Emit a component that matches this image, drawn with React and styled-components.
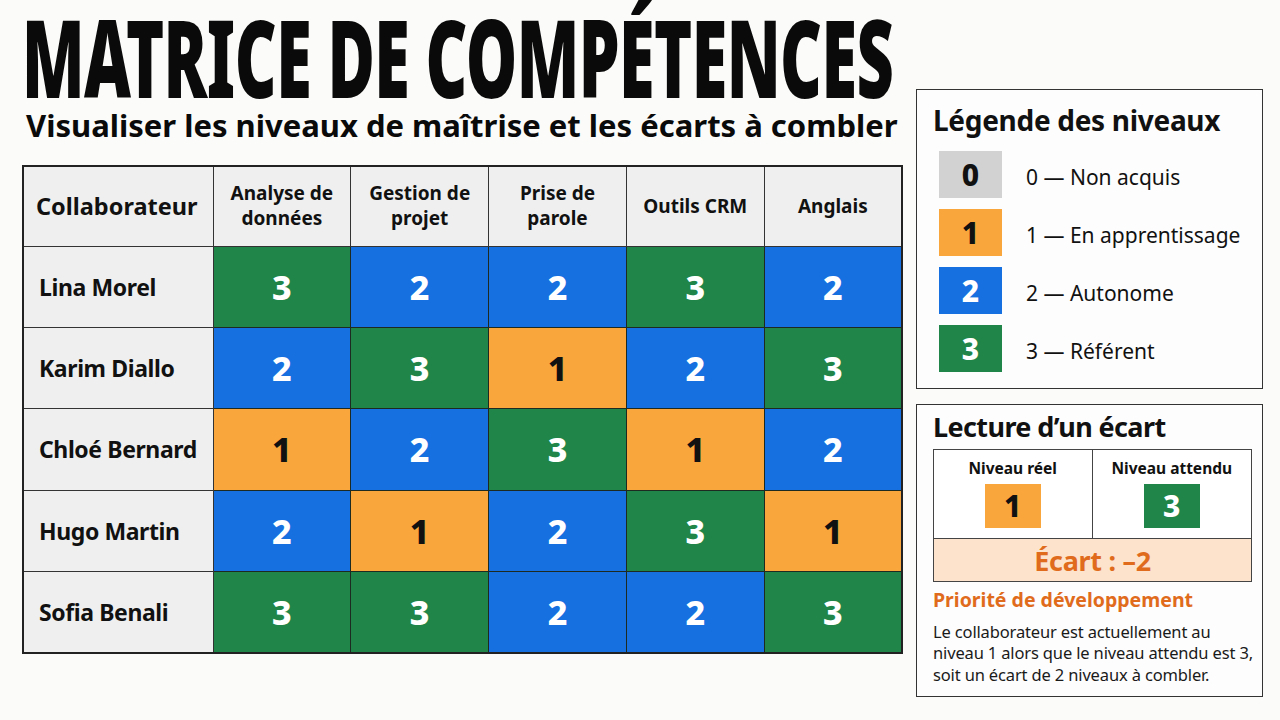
import React, { useLayoutEffect, useRef, useState } from "react";
import styled, { createGlobalStyle } from "styled-components";

const LEVELS = {
  0: { bg: "#d2d2d2", fg: "#111" },
  1: { bg: "#f9a63c", fg: "#111" },
  2: { bg: "#1670e0", fg: "#fff" },
  3: { bg: "#1f8548", fg: "#fff" },
};

const SKILLS = [
  ["Analyse de", "données"],
  ["Gestion de", "projet"],
  ["Prise de", "parole"],
  ["Outils CRM"],
  ["Anglais"],
];

const PEOPLE = [
  ["Lina Morel", [3, 2, 2, 3, 2]],
  ["Karim Diallo", [2, 3, 1, 2, 3]],
  ["Chloé Bernard", [1, 2, 3, 1, 2]],
  ["Hugo Martin", [2, 1, 2, 3, 1]],
  ["Sofia Benali", [3, 3, 2, 2, 3]],
];

const LEGEND = [
  [0, "0 — Non acquis"],
  [1, "1 — En apprentissage"],
  [2, "2 — Autonome"],
  [3, "3 — Référent"],
];

const GlobalStyle = createGlobalStyle`
  html, body { margin: 0; padding: 0; background: #fbfbf9; }
  body {
    font-family: "Noto Sans", "Open Sans", sans-serif;
    color: #111;
  }
  * { box-sizing: border-box; }
`;

const Page = styled.div`
  width: 1280px;
  height: 720px;
  overflow: hidden;
  display: grid;
  grid-template-columns: 881px 347px;
  column-gap: 13px;
  padding-left: 22px;
`;

const LeftColumn = styled.div`
  display: flex;
  flex-direction: column;
  align-items: flex-start;
  min-width: 0;
`;

const TitleText = styled.h1`
  margin: 1px 0 0;
  width: max-content;
  font-size: 109px;
  line-height: 1;
  font-weight: 900;
  letter-spacing: -1px;
  white-space: nowrap;
  color: #0a0a0a;
  transform-origin: left top;
`;

const Subtitle = styled.h2`
  margin: 0;
  padding-left: 4px;
  font-size: 31px;
  line-height: 1;
  font-weight: 700;
  white-space: nowrap;
  color: #0a0a0a;
`;

const Matrix = styled.table`
  margin-top: 24px;
  width: 881px;
  table-layout: fixed;
  border-collapse: collapse;
  border: 2px solid #222;
`;

const HeadCell = styled.th`
  height: 80px;
  background: #efefef;
  border: 1.5px solid #333;
  font-weight: 700;
  font-size: ${(p) => (p.$main ? "23.5px" : "19px")};
  line-height: 25px;
  text-align: ${(p) => (p.$main ? "left" : "center")};
  padding: ${(p) => (p.$main ? "0 0 0 12px" : "0 4px")};
  vertical-align: middle;
`;

const Row = styled.tr`
  height: 81.4px;
`;

const NameCell = styled.td`
  background: #efefef;
  border: 1.5px solid #333;
  font-weight: 700;
  font-size: 23px;
  letter-spacing: -0.4px;
  padding-left: 15px;
  white-space: nowrap;
`;

const LevelCell = styled.td`
  background: ${(p) => LEVELS[p.$level].bg};
  color: ${(p) => LEVELS[p.$level].fg};
  border: 1.5px solid #1d2a22;
  text-align: center;
  font-weight: 800;
  font-size: 34px;
`;

const RightColumn = styled.aside`
  padding-top: 89px;
  display: flex;
  flex-direction: column;
  gap: 15px;
`;

const Panel = styled.section`
  background: #fdfdfd;
  border: 1.5px solid #333;
  padding: ${(p) => p.$pad};
  height: ${(p) => p.$h}px;
  display: flex;
  flex-direction: column;
`;

const PanelTitle = styled.h3`
  margin: 0;
  font-size: ${(p) => p.$size}px;
  letter-spacing: ${(p) => p.$ls || 0}px;
  line-height: 1;
  font-weight: 700;
  white-space: nowrap;
`;

const LegendList = styled.div`
  margin-top: 17px;
  padding-left: 6px;
  display: flex;
  flex-direction: column;
  gap: 11px;
`;

const LegendRow = styled.div`
  display: flex;
  align-items: center;
  gap: 24px;
  font-size: 21px;
`;

const LegendLabel = styled.span`
  padding-top: 4px;
`;

const Swatch = styled.div`
  width: ${(p) => p.$w}px;
  height: ${(p) => p.$h}px;
  background: ${(p) => LEVELS[p.$level].bg};
  color: ${(p) => LEVELS[p.$level].fg};
  display: flex;
  align-items: center;
  justify-content: center;
  font-weight: 800;
  font-size: 30px;
  flex: none;
`;

const Compare = styled.div`
  margin-top: 9px;
  border: 1.5px solid #444;
  display: grid;
  grid-template-columns: 1fr 1fr;
  grid-template-rows: 89px 42px;
  background: #fff;
`;

const CompareCell = styled.div`
  display: flex;
  flex-direction: column;
  align-items: center;
  padding-top: 8px;
  gap: 6px;
  font-weight: 700;
  font-size: 15.5px;
  line-height: 20px;
  border-right: ${(p) => (p.$first ? "1.5px solid #444" : "none")};
  border-bottom: 1.5px solid #444;
`;

const GapRow = styled.div`
  grid-column: 1 / -1;
  background: #fde3cb;
  color: #e06b1c;
  font-weight: 700;
  font-size: 27px;
  letter-spacing: -0.3px;
  display: flex;
  align-items: center;
  justify-content: center;
`;

const Priority = styled.h4`
  margin: 8px 0 0;
  color: #e06b1c;
  font-size: 19.5px;
  line-height: 1;
  font-weight: 700;
  white-space: nowrap;
`;

const Paragraph = styled.p`
  margin: 11px 0 0;
  font-size: 16.5px;
  line-height: 21.5px;
  letter-spacing: -0.15px;
  white-space: nowrap;
  color: #1a1a1a;
`;

function Title({ children, width }) {
  const ref = useRef(null);
  const [scale, setScale] = useState(1);
  useLayoutEffect(() => {
    const el = ref.current;
    if (el && el.scrollWidth) setScale(width / el.scrollWidth);
  }, [width]);
  return (
    <TitleText ref={ref} style={{ transform: `scaleX(${scale})` }}>
      {children}
    </TitleText>
  );
}

export default function App() {
  return (
    <>
      <GlobalStyle />
      <Page>
        <LeftColumn>
          <Title width={871}>MATRICE DE COMPÉTENCES</Title>
          <Subtitle>Visualiser les niveaux de maîtrise et les écarts à combler</Subtitle>
          <Matrix>
            <colgroup>
              <col style={{ width: 190 }} />
              <col />
              <col />
              <col />
              <col />
              <col />
            </colgroup>
            <thead>
              <tr>
                <HeadCell $main>Collaborateur</HeadCell>
                {SKILLS.map((lines) => (
                  <HeadCell key={lines.join(" ")}>
                    {lines.map((l, i) => (
                      <React.Fragment key={l}>
                        {i > 0 && <br />}
                        {l}
                      </React.Fragment>
                    ))}
                  </HeadCell>
                ))}
              </tr>
            </thead>
            <tbody>
              {PEOPLE.map(([name, levels]) => (
                <Row key={name}>
                  <NameCell>{name}</NameCell>
                  {levels.map((lv, i) => (
                    <LevelCell key={i} $level={lv}>
                      {lv}
                    </LevelCell>
                  ))}
                </Row>
              ))}
            </tbody>
          </Matrix>
        </LeftColumn>

        <RightColumn>
          <Panel $pad="16px 10px 15px 16px" $h={300}>
            <PanelTitle $size={28} $ls={-0.3}>Légende des niveaux</PanelTitle>
            <LegendList>
              {LEGEND.map(([lv, label]) => (
                <LegendRow key={lv}>
                  <Swatch $level={lv} $w={63} $h={47}>
                    {lv}
                  </Swatch>
                  <LegendLabel>{label}</LegendLabel>
                </LegendRow>
              ))}
            </LegendList>
          </Panel>

          <Panel $pad="8px 10px 10px 16px" $h={293}>
            <PanelTitle $size={27} $ls={-0.6}>Lecture d’un écart</PanelTitle>
            <Compare>
              <CompareCell $first>
                Niveau réel
                <Swatch $level={1} $w={56} $h={44}>
                  1
                </Swatch>
              </CompareCell>
              <CompareCell>
                Niveau attendu
                <Swatch $level={3} $w={56} $h={44}>
                  3
                </Swatch>
              </CompareCell>
              <GapRow>Écart : –2</GapRow>
            </Compare>
            <Priority>Priorité de développement</Priority>
            <Paragraph>
              Le collaborateur est actuellement au
              <br />
              niveau 1 alors que le niveau attendu est 3,
              <br />
              soit un écart de 2 niveaux à combler.
            </Paragraph>
          </Panel>
        </RightColumn>
      </Page>
    </>
  );
}
